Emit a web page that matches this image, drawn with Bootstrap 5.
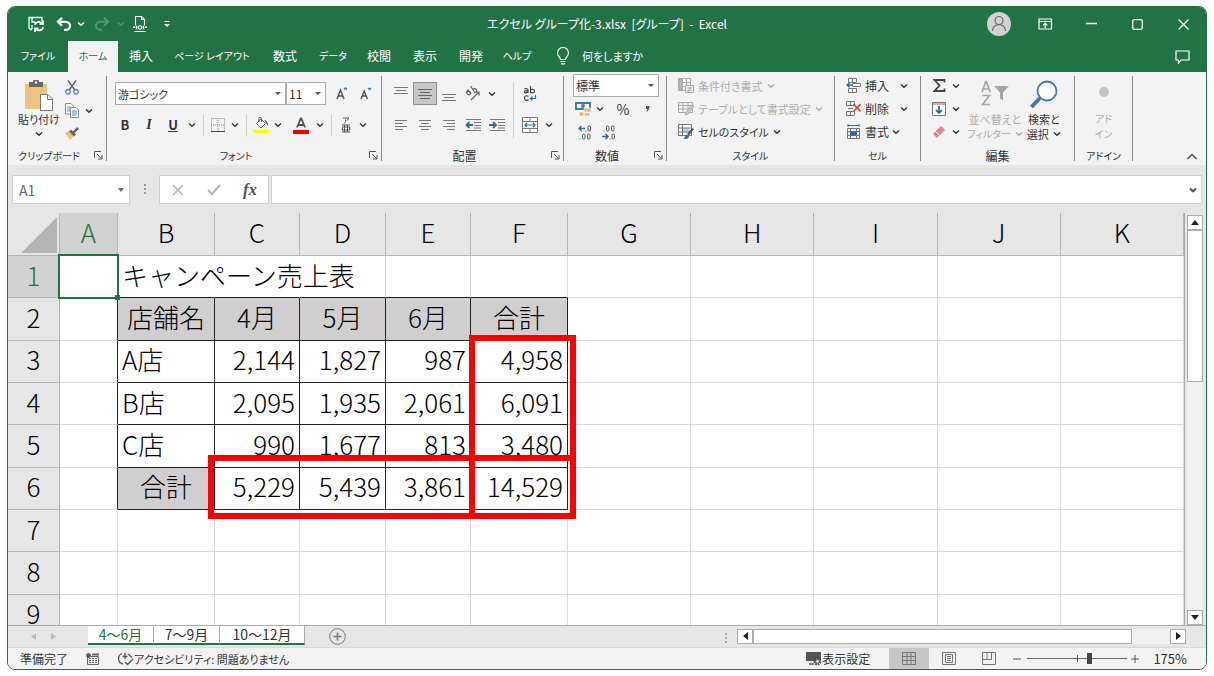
<!DOCTYPE html>
<html lang="ja">
<head>
<meta charset="utf-8">
<meta name="viewport" content="width=device-width, initial-scale=1">
<title>エクセル グループ化-3.xlsx - Excel</title>
<link href="https://cdn.jsdelivr.net/npm/bootstrap@5.3.0/dist/css/bootstrap.min.css" rel="stylesheet">
<style>
:root { --xl: #217346; --chrome: #e6e6e6; --ribbon: #f3f3f3; }
body { background: #fff; font-family: "Noto Sans CJK JP", sans-serif; font-size: 12px; line-height: 16px; color: #333; font-feature-settings: "palt"; }
.app { margin: 6px 7px; height: calc(100vh - 12px); border: 1px solid var(--xl); border-radius: 8px; overflow: hidden; background: var(--chrome); }
:where(.app) button, :where(.app) a { color: inherit; font-size: inherit; line-height: inherit; font-feature-settings: inherit; text-decoration: none; border: 0; border-radius: 0; background: none; padding: 0; display: inline-flex; align-items: center; justify-content: center; flex: none; white-space: nowrap; }
.app svg { display: block; flex: none; }
.kana { font-size: 11px; }
.kana-s { font-size: 10px; }
.w14 { width: 14px; } .w16 { width: 16px; } .w20 { width: 20px; } .w24 { width: 24px; }
.w46 { width: 46px; } .w50 { width: 50px; } .w60 { width: 60px; } .w96 { width: 96px; }
/* title bar and tabs */
.topbar { background: var(--xl); color: #fff; }
.titles { height: 34px; }
.quick { flex: 1 1 0; padding-left: 16px; }
.winctl { flex: 1 1 0; }
.tabs-row { height: 31px; }
.tabs-row a { height: 31px; padding-bottom: 2px; }
.tabs-row a.on { background: var(--ribbon); color: var(--xl); }
.app .cmt { margin-right: 16px; }
/* ribbon */
.ribbon { background: var(--ribbon); height: 93px; }
.ribbon .vr { margin: 4px 0; background: #8a8a8a; opacity: 1; width: 1px; min-height: 0; }
.grp { display: flex; flex-direction: column; flex: none; }
.grp-body { height: 74px; display: flex; }
.grp-label { height: 19px; display: flex; align-items: center; text-align: center; }
.app .launch { width: 16px; height: 16px; }
.g-clip { width: 98px; } .g-font { width: 274px; } .g-align { width: 181px; } .g-num { width: 102px; }
.g-style { width: 167px; } .g-cell { width: 85px; } .g-edit { width: 153px; } .g-add { width: 57px; }
.r23 { height: 23px; display: flex; align-items: center; }
.r24 { height: 24px; display: flex; align-items: center; }
.thin { width: 1px; background: #d0d0d0; margin: 0 4px; height: 22px; flex: none; }
.thin-tall { width: 1px; background: #d0d0d0; margin: 0 4px; height: 56px; flex: none; }
.pick { appearance: none; border: 1px solid #ababab; border-radius: 0; height: 23px; padding: 0 2px; font-feature-settings: inherit; color: #333; background: #fff url("data:image/svg+xml,%3Csvg xmlns='http://www.w3.org/2000/svg' width='6' height='4'%3E%3Cpath d='M0 0h6L3 3z' fill='%23555'/%3E%3C/svg%3E") no-repeat right 4px center; }
.off { color: #adadad; }
.app .sel { background: #c6c6c6; border: 1px solid #8f8f8f; height: 23px; }
.app .tall { flex-direction: column; justify-content: flex-start; }
.tall span { display: flex; align-items: center; height: 15px; }
/* formula bar */
.fbar { height: 49px; padding: 10px 4px 0 4px; }
.fbox { height: 29px; background: #fff; border: 1px solid #cfcfcf; }
.fbox input { border: 0; outline: 0; min-width: 0; background: none; font-size: 14px; color: #666; padding: 0 0 0 6px; }
.namebox { width: 118px; }
.fx { font: italic bold 17px "Liberation Serif", serif; color: #555; }
/* sheet */
.sheet { min-height: 0; }
.gridwrap { min-width: 0; overflow: hidden; position: relative; background: #fff; border-right: 1px solid #ababab; }
.cells { table-layout: fixed; width: 100%; height: 424px; border-collapse: separate; border-spacing: 0; font-size: 26px; line-height: 28px; font-weight: 300; font-feature-settings: normal; color: #000; white-space: nowrap; }
.cells th, .cells td { border: 0 solid #d9d9d9; border-width: 0 1px 1px 0; padding: 0 4px 4px; }
.cells th { background: var(--chrome); font-weight: 300; text-align: center; border-color: #b5b5b5; }
.cells thead th { height: 43px; }
.cells thead .all { padding: 4px 0 2px 13px; }
.cells th.on { background: #d2d2d2; color: var(--xl); }
.cells td.n { text-align: right; }
.cells td.h { background: #d0cece; text-align: center; }
.cells .k { border-color: #222; }
.cells .kr { border-right-color: #222; }
.cells .kb { border-bottom-color: #222; }
.cells .nr { border-right-color: #fff; }
.cells td.spill { overflow: visible; }
.active-cell { position: relative; }
.active-cell i { position: absolute; inset: -2px; border: 2px solid var(--xl); }
.active-cell i::after { content: ""; position: absolute; right: -3px; bottom: -3px; width: 5px; height: 5px; background: var(--xl); }
.mark-box { position: absolute; border: 6px solid #f00; }
.mark-total { left: 461px; top: 122px; width: 107px; height: 184px; }
.mark-sum { left: 200px; top: 242px; width: 368px; height: 64px; }
.vscroll { width: 21px; padding: 2px 3px 0 2px; flex: none; }
.app .sb { width: 16px; height: 15px; background: #fff; border: 1px solid #ababab; }
.vtrack { background: #f0f0f0; }
.vthumb { height: 40%; background: #fff; border: 1px solid #ababab; }
.htrack { width: 417px; background: #f0f0f0; }
.hthumb { width: 91%; height: 15px; background: #fff; border: 1px solid #ababab; }
/* sheet tabs */
.sheetbar { height: 23px; border-top: 1px solid #ababab; }
.app .stab { height: 19px; background: #fff; font-size: 14px; border-right: 1px solid #ababab; border-bottom: 2px solid var(--xl); width: 66px; }
.app .stab.wide { width: 85px; }
.app .stab.on { color: var(--xl); }
.hs { height: 18px; padding: 3px 20px 0 0; }
/* status bar */
.status { height: 22px; background: var(--ribbon); border-top: 1px solid #d8d8d8; }
.app .view { width: 40px; height: 21px; }
.app .view.on { background: #c6c6c6; }
.zoom-range { appearance: none; width: 100px; height: 13px; margin: 0; background: linear-gradient(#555,#555) 50% 50%/1px 7px no-repeat, linear-gradient(#666,#666) 0 50%/100% 1px no-repeat; }
.zoom-range::-webkit-slider-thumb { appearance: none; width: 5px; height: 11px; background: #444; border: 0; border-radius: 0; }
</style>
</head>
<body>
<svg width="0" height="0" class="position-absolute" aria-hidden="true">
  <symbol id="chev" viewBox="0 0 8 6"><path d="M1 1.500 4 4.300 7 1.500" fill="none" stroke="currentColor" stroke-width="1.400"/></symbol>
  <symbol id="launch" viewBox="0 0 9 9"><path d="M.5 7V.5H7M3 3l4.500 4.500M8 4v4H4" fill="none" stroke="#555"/></symbol>
</svg>
<div class="app d-flex flex-column">
  <header class="topbar">
    <div class="titles d-flex align-items-center">
      <div class="quick d-flex align-items-center">
        <button class="w24" aria-label="上書き保存"><svg width="18" height="18" viewBox="0 0 18 18" fill="none" stroke="#fff" stroke-width="1.300"><path d="M5 14.500H3.500L2 13V2.500h13V6M5 2.500V7h3M5 14v-4"/><path d="M7.800 9.800a4.300 4.300 0 0 1 7.700-1M16 5.500v3.700h-3.500M16.200 12.200a4.300 4.300 0 0 1-7.700 1.300M8 17v-3.700h3.500" stroke-width="1.700"/></svg></button>
        <button class="w24 ms-1" aria-label="元に戻す"><svg width="16" height="14" viewBox="0 0 16 14" fill="none" stroke="#fff" stroke-width="2.300"><path d="M6 .8 2 4.800l4 4M2.300 4.800H10a4 4 0 0 1 0 8H8"/></svg></button>
        <button style="width:10px" aria-label="元に戻す一覧"><svg width="8" height="6"><use href="#chev"/></svg></button>
        <button class="w24 ms-1" aria-label="やり直し"><svg width="16" height="14" viewBox="0 0 16 14" fill="none" stroke="#4f9870" stroke-width="2"><path d="m10 .8 4 4-4 4M13.700 4.800H6a4 4 0 0 0 0 8h2"/></svg></button>
        <button class="w14" style="color:#4f9870" aria-label="やり直し一覧"><svg width="8" height="6"><use href="#chev"/></svg></button>
        <button class="w24" aria-label="印刷プレビュー"><svg width="14" height="16" viewBox="0 0 14 16" fill="none" stroke="#fff" stroke-width="1.100"><path d="M2.500 9.500v-9h6l3 3v6M8.500.5v3h3M1.500 15.500h11"/><path d="M0 11.300h2M12 11.300h2M3.500 9.800v3.500M10.500 9.800v3.500" stroke-width="1.500"/><circle cx="7" cy="11.500" r="1.700"/></svg></button>
        <button class="w14 ms-2" aria-label="ツールバーのカスタマイズ"><svg width="8" height="8" viewBox="0 0 8 8"><path d="M1.500 1.500h5" stroke="#fff"/><path d="M1 4h6L4 7z" fill="#fff"/></svg></button>
      </div>
      <div class="me-3">エクセル グループ化-3.xlsx&nbsp; [グループ]&nbsp; -&nbsp; Excel</div>
      <div class="winctl d-flex justify-content-end">
        <button class="w46" aria-label="アカウント"><svg width="24" height="24" viewBox="0 0 24 24"><circle cx="12" cy="12" r="12" fill="#d2d2d2"/><g fill="none" stroke="#666" stroke-width="1.200"><circle cx="12" cy="8.500" r="4"/><path d="M5.500 19c0-8.600 13-8.600 13 0"/></g></svg></button>
        <button class="w46" aria-label="リボンの表示オプション"><svg width="15" height="12" viewBox="0 0 15 12" fill="none" stroke="#fff" stroke-width="1.200"><path d="M1 1h12.500v10H1zM1 3.500h12.500M7.200 10V5.500M5 7.500l2.200-2.200 2.200 2.200"/></svg></button>
        <button class="w46" aria-label="最小化"><svg width="11" height="11" viewBox="0 0 11 11"><path d="M0 4.500h11" stroke="#fff" stroke-width="1.300"/></svg></button>
        <button class="w46" aria-label="最大化"><svg width="11" height="11" viewBox="0 0 11 11"><rect x=".7" y=".7" width="9.600" height="9.600" rx="1.500" fill="none" stroke="#fff" stroke-width="1.300"/></svg></button>
        <button class="w46" aria-label="閉じる"><svg width="11" height="11" viewBox="0 0 11 11"><path d="m.5.5 10 10m0-10-10 10" stroke="#fff" stroke-width="1.300"/></svg></button>
      </div>
    </div>
    <nav class="tabs-row d-flex align-items-center">
      <a href="#" class="w60 kana-s">ファイル</a><a href="#" class="w50 kana-s on">ホーム</a><a href="#" class="w46">挿入</a><a href="#" class="w96 kana-s">ページ レイアウト</a><a href="#" class="w50">数式</a><a href="#" class="w46 kana-s">データ</a><a href="#" class="w46">校閲</a><a href="#" class="w46">表示</a><a href="#" class="w46">開発</a><a href="#" class="w46 kana-s">ヘルプ</a>
      <a href="#" class="ms-3 kana"><svg width="14" height="18" viewBox="0 0 14 18" fill="none" stroke="#fff" stroke-width="1.200"><path d="M4.500 12.500c0-2.500-3-3-3-6.500a5.500 5.500 0 0 1 11 0c0 3.500-3 4-3 6.500zM4.500 14.500h5M5 16.800h4"/></svg><span class="ms-2 ps-1">何をしますか</span></a>
      <button class="ms-auto cmt" aria-label="コメント"><svg width="15" height="14" viewBox="0 0 15 14" fill="none" stroke="#fff" stroke-width="1.200"><path d="M1 1h13v9H6l-2.500 3v-3H1z"/></svg></button>
    </nav>
  </header>

  <section class="ribbon d-flex">
    <div class="grp g-clip">
      <div class="grp-body">
        <button class="tall kana ms-2 pt-2" style="width:46px"><svg width="28" height="31" viewBox="0 0 28 31"><path d="M0 4h22v25H0z" fill="#eac282"/><path d="M4 2h4a3 3 0 0 1 6 0h4v5H4z" fill="#666"/><circle cx="11" cy="2.500" r="1.200" fill="#fff"/><path d="M15.500 14.500H23l4.500 4.500v11.500h-12z" fill="#fff" stroke="#777"/><path d="M22.500 14.500v5h5" fill="none" stroke="#777"/></svg><span>貼り付け</span><span><svg width="8" height="6"><use href="#chev"/></svg></span></button>
        <div class="pt-1">
          <div class="r23"><button class="w20" aria-label="切り取り"><svg width="14" height="15" viewBox="0 0 14 15" fill="none"><path d="m3 .5 6.500 9M11 .5l-6.500 9" stroke="#666" stroke-width="1.500"/><circle cx="3" cy="11.800" r="2.300" stroke="#4a86c5" stroke-width="1.300"/><circle cx="11" cy="11.800" r="2.300" stroke="#4a86c5" stroke-width="1.300"/></svg></button></div>
          <div class="r23"><button class="w20" aria-label="コピー"><svg width="14" height="15" viewBox="0 0 14 15" fill="#fff"><path d="M.5.5H6l2.500 2.500v8h-8z" stroke="#888"/><path d="M2 4h4M2 6h4M2 8h4" stroke="#888"/><path d="M5.500 4.500H11l2.500 2.500v7.500h-8z" stroke="#888"/><path d="M7 8h5M7 10h5M7 12h5" stroke="#4a86c5"/></svg></button><button class="w14" aria-label="コピー一覧"><svg width="8" height="6"><use href="#chev"/></svg></button></div>
          <div class="r23"><button class="w20" aria-label="書式のコピー"><svg width="14" height="13" viewBox="0 0 14 13"><path d="m0 6 4-2 5 5-4 4z" fill="#eac282"/><path d="M4 4.500 6 2.500l2 2L12 0l2 2-4.500 4 1.500 1.500-2 2z" fill="#666"/></svg></button></div>
        </div>
      </div>
      <div class="grp-label"><span class="flex-fill kana-s">クリップボード</span><button class="launch" aria-label="クリップボードの設定"><svg width="9" height="9"><use href="#launch"/></svg></button></div>
    </div>
    <div class="vr"></div>
    <div class="grp g-font">
      <div class="grp-body flex-column">
        <div class="r23" style="margin-top:10px"><select class="pick kana ms-2" style="width:171px" aria-label="フォント"><option>游ゴシック</option></select><select class="pick" style="width:40px" aria-label="フォント サイズ"><option>11</option></select><button class="w24 ms-1" aria-label="フォント サイズの拡大"><svg width="12" height="14" viewBox="0 0 12 14" fill="none"><path d="m1 12 3.500-9L8 12M2.300 9h4.500" stroke="#555" stroke-width="1.500"/><path d="m8 2.500 1.500-1.500L11 2.500" stroke="#2b6cb0" stroke-width="1.300"/></svg></button><button class="w24" aria-label="フォント サイズの縮小"><svg width="12" height="14" viewBox="0 0 12 14" fill="none"><path d="m1 12 3.200-8 3.200 8M2.300 9h4" stroke="#555" stroke-width="1.500"/><path d="m8 1 1.500 1.500L11 1" stroke="#2b6cb0" stroke-width="1.300"/></svg></button></div>
        <div class="r24 mt-2" style="padding-left:6px"><button class="w24" aria-label="太字"><b style="font-size:13px">B</b></button><button class="w24" aria-label="斜体"><b style="font:italic bold 14px 'Liberation Serif',serif">I</b></button><button class="w24" aria-label="下線"><b class="text-decoration-underline" style="font-size:13px">U</b></button><button class="w14" aria-label="下線の種類"><svg width="8" height="6"><use href="#chev"/></svg></button><div class="thin"></div><button class="w20" aria-label="罫線"><svg width="14" height="14" viewBox="0 0 14 14" fill="none" stroke="#888"><path d="M.5.5h13v13M.5.5v13M7 0v13M0 7h14" stroke-dasharray="1 1"/><path d="M0 13.500h14" stroke="#444"/></svg></button><button class="w14" aria-label="罫線の種類"><svg width="8" height="6"><use href="#chev"/></svg></button><div class="thin"></div><button class="w20" aria-label="塗りつぶしの色"><svg width="17" height="16" viewBox="0 0 17 16"><path d="M0 12.500h16V16H0z" fill="#ff0"/><path d="M3.500 6.500 8 2l4.500 4.500L8 11z" fill="#fff" stroke="#555"/><path d="M6 5V1.500a1.200 1.200 0 0 1 2.400 0V5" fill="none" stroke="#555"/><path d="M11 3c3 0 4 3 4 6-1.500-1-1.500-3-4-6z" fill="#2b6cb0"/></svg></button><button class="w14" aria-label="塗りつぶしの色一覧"><svg width="8" height="6"><use href="#chev"/></svg></button><button class="w24 ms-1" aria-label="フォントの色"><svg width="16" height="17" viewBox="0 0 16 17"><path d="m4 10.500 3.700-9h.6l3.700 9M5.300 8h5.400" fill="none" stroke="#555" stroke-width="1.800"/><path d="M0 13h16v4H0z" fill="#e00"/></svg></button><button class="w14" aria-label="フォントの色一覧"><svg width="8" height="6"><use href="#chev"/></svg></button><div class="thin"></div><button class="w20" aria-label="ふりがな"><svg width="10" height="16" viewBox="0 0 10 16" fill="none" stroke="#555"><path d="M2 1h6L6 3.500M4.500 2.500v2L3 6.500M1 8h8M1 15h8M3.500 8v7M6.500 8v7M1.500 10h7v3h-7z"/></svg></button><button class="w14" aria-label="ふりがな一覧"><svg width="8" height="6"><use href="#chev"/></svg></button></div>
      </div>
      <div class="grp-label"><span class="flex-fill kana-s">フォント</span><button class="launch" aria-label="フォントの設定"><svg width="9" height="9"><use href="#launch"/></svg></button></div>
    </div>
    <div class="vr"></div>
    <div class="grp g-align">
      <div class="grp-body align-items-start" style="padding:10px 0 0 7px">
        <div>
          <div class="r23"><button class="w24" aria-label="上揃え"><svg width="14" height="16" viewBox="0 0 14 16" stroke="#777"><path d="M0 1.500h14M2 4.500h10M0 7.500h14"/></svg></button><button class="w24 sel" aria-label="上下中央揃え"><svg width="14" height="12" viewBox="0 0 14 12" stroke="#666"><path d="M0 1.500h14M2 4.500h10M0 7.500h14M2 10.500h10"/></svg></button><button class="w24" aria-label="下揃え"><svg width="14" height="16" viewBox="0 0 14 16" stroke="#777"><path d="M0 8.500h14M2 11.500h10M0 14.500h14"/></svg></button><button class="w24" aria-label="方向"><svg width="16" height="15" viewBox="0 0 16 15" fill="none" stroke="#666" stroke-width="1.200"><path d="M1 6.500 3 4l3 4M2 7a1.700 1.700 0 1 0 3.500 0A1.700 1.700 0 0 0 2 7M5.500 0l4 6M8 3.500a2 2 0 1 1 1 3M6 14l8-8M10.500 6H14v3.500"/></svg></button><button class="w14" aria-label="方向一覧"><svg width="8" height="6"><use href="#chev"/></svg></button></div>
          <div class="r24 mt-2"><button class="w24" aria-label="左揃え"><svg width="12" height="10" viewBox="0 0 12 10" stroke="#777"><path d="M0 .5h12M0 3.500h8M0 6.500h12M0 9.500h8"/></svg></button><button class="w24" aria-label="中央揃え"><svg width="12" height="10" viewBox="0 0 12 10" stroke="#777"><path d="M0 .5h12M2 3.500h8M0 6.500h12M2 9.500h8"/></svg></button><button class="w24" aria-label="右揃え"><svg width="12" height="10" viewBox="0 0 12 10" stroke="#777"><path d="M0 .5h12M4 3.500h8M0 6.500h12M4 9.500h8"/></svg></button><button class="w24" aria-label="インデントを減らす"><svg width="16" height="12" viewBox="0 0 16 12" fill="none" stroke="#777"><path d="M1 .5h15M9 3.500h7M9 6.500h7M1 11.500h15M9 9h7"/><path d="M8 6H2M4.500 3 1.500 6l3 3" stroke="#2b6cb0" stroke-width="1.800"/></svg></button><button class="w24" aria-label="インデントを増やす"><svg width="16" height="12" viewBox="0 0 16 12" fill="none" stroke="#777"><path d="M1 .5h15M9 3.500h7M9 6.500h7M1 11.500h15M9 9h7"/><path d="M0 6h6M4 3l3 3-3 3" stroke="#2b6cb0" stroke-width="1.800"/></svg></button></div>
        </div>
        <div class="thin-tall"></div>
        <div>
          <div class="r23"><button class="w24" aria-label="折り返して全体を表示する"><svg width="14" height="16" viewBox="0 0 14 16" fill="none" stroke="#444" stroke-width="1.200"><path d="M1.500 3c2-1 3.500 0 3.500 1v3M5 5C3 4.500 1.300 5 1.300 6S3.500 7.500 5 6M7.500 0v7M7.500 4.500c1-2 4-1.500 4 .5s-3 2.500-4 .8M5.500 10.500C3.500 9 1.500 10 1.500 12s2 3 4 1.800"/><path d="M12.500 9v3.500h-5M9.500 10.500l-2 2 2 2" stroke="#2b6cb0"/></svg></button></div>
          <div class="r24 mt-2"><button class="w24" aria-label="セルを結合して中央揃え"><svg width="16" height="16" viewBox="0 0 16 16" fill="#fff" stroke="#777"><path d="M.5.5h15v15H.5zM.5 4.500h15M.5 11.500h15M8 .5v4M8 11.500v4"/><path d="M3 8h10M5 6 3 8l2 2M11 6l2 2-2 2" fill="none" stroke="#2b6cb0" stroke-width="1.200"/></svg></button><button class="w14" aria-label="結合一覧"><svg width="8" height="6"><use href="#chev"/></svg></button></div>
        </div>
      </div>
      <div class="grp-label"><span class="flex-fill">配置</span><button class="launch" aria-label="配置の設定"><svg width="9" height="9"><use href="#launch"/></svg></button></div>
    </div>
    <div class="vr"></div>
    <div class="grp g-num">
      <div class="grp-body flex-column" style="padding:2px 0 0 9px">
        <select class="pick" style="width:86px" aria-label="表示形式"><option>標準</option></select>
        <div class="r23"><button class="w20" aria-label="通貨表示形式"><svg width="17" height="16" viewBox="0 0 17 16"><path d="M0 1h16v8H0z" fill="#3c7ab8"/><path d="M2 3h12v4H2z" fill="#fff"/><circle cx="8" cy="5" r="2" fill="#3c7ab8"/><path d="M9 7h7v4H9zM9 12h6v3H9zM4 11h5v4H4z" fill="#e8b768" stroke="#fff" stroke-width=".6"/></svg></button><button class="w14" aria-label="通貨一覧"><svg width="8" height="6"><use href="#chev"/></svg></button><button class="w24 ms-1" style="font-size:14px">%</button><button class="w24" aria-label="桁区切り"><svg width="5" height="8" viewBox="0 0 5 8"><path d="M1 1h3.500c0 3-1 5-3.500 6.500C2 6 2.300 5 2.300 4H1z" fill="#555"/></svg></button></div>
        <div class="r24"><button class="w24" aria-label="小数点以下の表示桁数を増やす"><svg width="14" height="15" viewBox="0 0 14 15" fill="none" stroke="#555"><path d="M7 3.500H1.500M3.500 1 1 3.500 3.500 6" stroke="#2b6cb0" stroke-width="1.500"/><rect x="10" y="1" width="2.500" height="5" rx="1.200"/><path d="M7.500 6h1M1.500 14h1"/><rect x="4.500" y="9" width="2.500" height="5" rx="1.200"/><rect x="9.500" y="9" width="2.500" height="5" rx="1.200"/></svg></button><button class="w24" aria-label="小数点以下の表示桁数を減らす"><svg width="14" height="15" viewBox="0 0 14 15" fill="none" stroke="#555"><path d="M0 11.500h5.500M3.500 9 6 11.500 3.500 14" stroke="#2b6cb0" stroke-width="1.500"/><rect x="10" y="9" width="2.500" height="5" rx="1.200"/><path d="M7.500 14h1M1.500 6h1"/><rect x="4.500" y="1" width="2.500" height="5" rx="1.200"/><rect x="9.500" y="1" width="2.500" height="5" rx="1.200"/></svg></button></div>
      </div>
      <div class="grp-label"><span class="flex-fill">数値</span><button class="launch" aria-label="数値の設定"><svg width="9" height="9"><use href="#launch"/></svg></button></div>
    </div>
    <div class="vr"></div>
    <div class="grp g-style">
      <div class="grp-body flex-column align-items-start kana" style="padding:2px 0 0 11px">
        <button class="r23 off"><svg width="16" height="15" viewBox="0 0 16 15" fill="none" stroke="#aaa"><path d="M.5.5h12v12H.5zM.5 4.500h12M.5 8.500h12M4.500.5v12M8.500.5v12"/><path d="M1 1h3v11H1z" fill="#bbb"/><path d="M7.500 7.500h8v7h-8z" fill="#f3f3f3"/><path d="M9 10h5M9 12.500h5M10 14l3-5.500"/></svg><span class="mx-1">条件付き書式</span><svg width="8" height="6"><use href="#chev"/></svg></button>
        <button class="r23 off"><svg width="16" height="15" viewBox="0 0 16 15" fill="none" stroke="#aaa"><path d="M.5 1.500h14v10H.5zM.5 4.500h14M.5 8h14M5 1.500v10M10 1.500v10"/><path d="m7 14 1-3 6-7 2 1-6 8z" fill="#ccc"/></svg><span class="mx-1">テーブルとして書式設定</span><svg width="8" height="6"><use href="#chev"/></svg></button>
        <button class="r23"><svg width="16" height="15" viewBox="0 0 16 15" fill="none" stroke="#777"><path d="M.5.5h13v11H.5z" fill="#fff"/><path d="M4.500 4h7v4h-7z" fill="#bcd5ee" stroke="none"/><path d="M.5 4h13M.5 8h13M4.500.5v11"/><path d="m9 10 5-6 2 1-5 6.500z" fill="#555" stroke="none"/><path d="M5 14.500c2 0 1.500-3 4-4l2 2c0 2-3 3-6 2z" fill="#2b6cb0" stroke="none"/></svg><span class="mx-1">セルのスタイル</span><svg width="8" height="6"><use href="#chev"/></svg></button>
      </div>
      <div class="grp-label"><span class="flex-fill kana-s">スタイル</span></div>
    </div>
    <div class="vr"></div>
    <div class="grp g-cell">
      <div class="grp-body flex-column align-items-start" style="padding:2px 0 0 11px">
        <div class="r23"><button><svg width="15" height="15" viewBox="0 0 15 15" fill="none" stroke="#777"><path d="M2.500.5h8v4h-8zM6.500.5v4M2.500 10.500h8v4h-8zM6.500 10.500v4M6.500 5.500h8v3h-8z"/><path d="M6 7H1M3.500 4.800 1 7l2.500 2.200" stroke="#2b6cb0" stroke-width="1.500"/></svg><span class="ms-1">挿入</span></button><button class="w14 ms-2" aria-label="挿入一覧"><svg width="8" height="6"><use href="#chev"/></svg></button></div>
        <div class="r23"><button><svg width="15" height="15" viewBox="0 0 15 15" fill="none" stroke="#777"><path d="M.5.5h8v4h-8zM4.500.5v4M.5 10.500h8v4h-8zM4.500 10.500v4M2 7.500h5"/><path d="m7.500 3 7 7.500m0-7.500-7 7.500" stroke="#d8451f" stroke-width="1.600"/></svg><span class="ms-1">削除</span></button><button class="w14 ms-2" aria-label="削除一覧"><svg width="8" height="6"><use href="#chev"/></svg></button></div>
        <div class="r23"><button><svg width="15" height="16" viewBox="0 0 15 16" fill="none" stroke="#777"><path d="M1.500 4.500h12v10h-12zM1.500 7.500h12M1.500 11.500h12M4.500 4.500v10M10.500 4.500v10"/><path d="M5 8h5v3H5z" fill="#2b6cb0" stroke="#2b6cb0"/><path d="M2 1.500h11M2 0v3M13 0v3" stroke="#2b6cb0"/></svg><span class="ms-1">書式</span></button><button class="w14" aria-label="書式一覧"><svg width="8" height="6"><use href="#chev"/></svg></button></div>
      </div>
      <div class="grp-label"><span class="flex-fill kana-s">セル</span></div>
    </div>
    <div class="vr"></div>
    <div class="grp g-edit">
      <div class="grp-body" style="padding-left:8px">
        <div style="padding-top:2px">
          <div class="r23"><button class="w20" aria-label="合計"><svg width="13" height="13" viewBox="0 0 13 13" fill="none" stroke="#444" stroke-width="1.800"><path d="M11.500 3.500V1H1.500l5 5.500-5 5.500h10V9.500"/></svg></button><button class="w14" aria-label="合計一覧"><svg width="8" height="6"><use href="#chev"/></svg></button></div>
          <div class="r23"><button class="w20" aria-label="フィル"><svg width="14" height="14" viewBox="0 0 14 14" fill="#fff" stroke="#777"><path d="M.5.5h13v13H.5z"/><path d="M.5 2h13" stroke="#777"/><path d="M7 4v7M4 8l3 3 3-3" fill="none" stroke="#2b6cb0" stroke-width="1.800"/></svg></button><button class="w14" aria-label="フィル一覧"><svg width="8" height="6"><use href="#chev"/></svg></button></div>
          <div class="r23"><button class="w20" aria-label="クリア"><svg width="14" height="13" viewBox="0 0 14 13"><path d="m1 9 8-8 4 4-8 8z" fill="#e08396"/><path d="m3.500 6.500 4 4" stroke="#f3f3f3"/></svg></button><button class="w14" aria-label="クリア一覧"><svg width="8" height="6"><use href="#chev"/></svg></button></div>
        </div>
        <button class="tall off kana pt-2 ms-1"><svg width="28" height="31" viewBox="0 0 28 31" fill="none" stroke="#a6a6a6" stroke-width="1.700"><path d="M1 12 4.800 1.500h.6L9.200 12M2.300 9h5.600M1.500 15.500h7l-7 9h7.500"/><path d="M13 6h15l-6 6.500v8l-3-2v-6z" fill="#a6a6a6" stroke="none"/></svg><span>並べ替えと</span><span class="kana-s">フィルター<svg class="ms-1" width="8" height="6"><use href="#chev"/></svg></span></button>
        <button class="tall kana pt-2 ms-1"><svg width="28" height="31" viewBox="0 0 28 31"><path d="M10 18 1.500 27" stroke="#3c7ab8" stroke-width="4"/><circle cx="17" cy="11" r="9.500" fill="#fff" stroke="#3c7ab8" stroke-width="1.800"/></svg><span>検索と</span><span>選択<svg class="ms-1" width="8" height="6"><use href="#chev"/></svg></span></button>
      </div>
      <div class="grp-label"><span class="flex-fill">編集</span></div>
    </div>
    <div class="vr"></div>
    <div class="grp g-add">
      <div class="grp-body justify-content-center">
        <button class="tall off kana-s pt-2"><svg width="28" height="31" viewBox="0 0 28 31"><circle cx="14" cy="12" r="5" fill="#c4c4c4"/></svg><span>アド</span><span>イン</span></button>
      </div>
      <div class="grp-label"><span class="flex-fill kana-s">アドイン</span></div>
    </div>
    <div class="vr"></div>
    <button class="ms-auto me-2 align-self-end pb-1" aria-label="リボンを折りたたむ"><svg width="12" height="8" viewBox="0 0 12 8"><path d="m1.500 6 4.500-4.500L10.500 6" fill="none" stroke="#444" stroke-width="1.300"/></svg></button>
  </section>

  <section class="fbar d-flex">
    <div class="fbox namebox d-flex align-items-center"><input class="flex-fill" value="A1" aria-label="名前ボックス"><button class="w16" aria-label="名前一覧"><svg width="6" height="4" viewBox="0 0 6 4"><path d="M0 0h6L3 4z" fill="#666"/></svg></button></div>
    <div class="d-flex align-items-center justify-content-center" style="width:29px;height:28px"><svg width="2" height="11" fill="#999"><path d="M0 0h2v2H0zM0 4h2v2H0zM0 8h2v2H0z"/></svg></div>
    <div class="fbox d-flex align-items-center justify-content-around" style="width:110px">
      <button class="w24" aria-label="キャンセル"><svg width="12" height="12" viewBox="0 0 12 12"><path d="m1 1 10 10m0-10L1 11" stroke="#b5b5b5" stroke-width="1.500"/></svg></button>
      <button class="w24" aria-label="入力"><svg width="14" height="12" viewBox="0 0 14 12"><path d="m1 6 4 4 8-9" fill="none" stroke="#b5b5b5" stroke-width="2.200"/></svg></button>
      <button class="w24 fx" aria-label="関数の挿入">fx</button>
    </div>
    <div class="fbox d-flex align-items-center flex-fill" style="margin-left:2px"><input class="flex-fill" aria-label="数式バー"><button class="w16" aria-label="数式バーの展開"><svg width="8" height="6" viewBox="0 0 8 6"><path d="M1 1.500 4 4.300 7 1.500" fill="none" stroke="#555" stroke-width="2"/></svg></button></div>
  </section>

  <main class="sheet d-flex flex-fill">
    <div class="gridwrap flex-fill">
      <table class="cells">
        <colgroup><col style="width:52px"><col style="width:58px"><col style="width:97px"><col style="width:85px"><col style="width:86px"><col style="width:85px"><col style="width:97px"><col><col><col><col><col></colgroup>
        <thead><tr><th class="all" aria-label="すべて選択"><svg width="36" height="36"><path d="M36 0v36H0z" fill="#b4b4b4"/></svg></th><th class="on">A</th><th>B</th><th>C</th><th>D</th><th>E</th><th>F</th><th>G</th><th>H</th><th>I</th><th>J</th><th>K</th></tr></thead>
        <tbody>
        <tr><th class="on">1</th><td class="active-cell"><i></i></td><td class="spill kb nr">キャンペーン売上表</td><td class="kb nr"></td><td class="kb"></td><td class="kb"></td><td class="kb"></td><td></td><td></td><td></td><td></td><td></td></tr>
        <tr><th>2</th><td class="kr"></td><td class="h k">店舗名</td><td class="h k">4月</td><td class="h k">5月</td><td class="h k">6月</td><td class="h k">合計</td><td></td><td></td><td></td><td></td><td></td></tr>
        <tr><th>3</th><td class="kr"></td><td class="k">A店</td><td class="n k">2,144</td><td class="n k">1,827</td><td class="n k">987</td><td class="n k">4,958</td><td></td><td></td><td></td><td></td><td></td></tr>
        <tr><th>4</th><td class="kr"></td><td class="k">B店</td><td class="n k">2,095</td><td class="n k">1,935</td><td class="n k">2,061</td><td class="n k">6,091</td><td></td><td></td><td></td><td></td><td></td></tr>
        <tr><th>5</th><td class="kr"></td><td class="k">C店</td><td class="n k">990</td><td class="n k">1,677</td><td class="n k">813</td><td class="n k">3,480</td><td></td><td></td><td></td><td></td><td></td></tr>
        <tr><th>6</th><td class="kr"></td><td class="h k">合計</td><td class="n k">5,229</td><td class="n k">5,439</td><td class="n k">3,861</td><td class="n k">14,529</td><td></td><td></td><td></td><td></td><td></td></tr>
        <tr><th>7</th><td></td><td></td><td></td><td></td><td></td><td></td><td></td><td></td><td></td><td></td><td></td></tr>
        <tr><th>8</th><td></td><td></td><td></td><td></td><td></td><td></td><td></td><td></td><td></td><td></td><td></td></tr>
        <tr><th>9</th><td></td><td></td><td></td><td></td><td></td><td></td><td></td><td></td><td></td><td></td><td></td></tr>
        </tbody>
      </table>
      <div class="mark-box mark-total"></div>
      <div class="mark-box mark-sum"></div>
    </div>
    <div class="vscroll d-flex flex-column">
      <button class="sb" aria-label="上へスクロール"><svg width="8" height="5"><path d="M0 5h8L4 0z" fill="#222"/></svg></button>
      <div class="vtrack flex-fill"><div class="vthumb"></div></div>
      <button class="sb" aria-label="下へスクロール"><svg width="8" height="5"><path d="M0 0h8L4 5z" fill="#222"/></svg></button>
    </div>
  </main>

  <div class="sheetbar d-flex">
    <div class="d-flex align-items-center justify-content-center" style="width:80px;padding-right:10px"><button class="w20" aria-label="前のシート"><svg width="5" height="7"><path d="M5 0v7L0 3.500z" fill="#bbb"/></svg></button><button class="w20" aria-label="次のシート"><svg width="5" height="7"><path d="M0 0v7l5-3.500z" fill="#bbb"/></svg></button></div>
    <button class="stab on">4～6月</button><button class="stab">7～9月</button><button class="stab wide">10～12月</button>
    <button class="ms-4" aria-label="新しいシート"><svg width="17" height="17" viewBox="0 0 17 17" fill="none" stroke="#777"><circle cx="8.500" cy="8.500" r="7.800"/><path d="M8.500 4.500v8M4.500 8.500h8" stroke-width="1.500"/></svg></button>
    <div class="hs d-flex ms-auto">
      <svg class="me-2 mt-1" width="6" height="10" fill="#aaa"><path d="M2 0h2v2H2zM2 4h2v2H2zM2 8h2v2H2z"/></svg>
      <button class="sb" aria-label="左へスクロール"><svg width="5" height="8"><path d="M5 0v8L0 4z" fill="#222"/></svg></button>
      <div class="htrack"><div class="hthumb"></div></div>
      <button class="sb" aria-label="右へスクロール"><svg width="5" height="8"><path d="M0 0v8l5-4z" fill="#222"/></svg></button>
    </div>
  </div>

  <footer class="status d-flex align-items-center">
    <span style="padding-left:12px">準備完了</span>
    <button class="w16 ms-3" style="margin-right:18px" aria-label="マクロの記録"><svg width="13" height="12" viewBox="0 0 13 12" fill="none" stroke="#666"><path d="M1.500 3.500h11v8h-11z"/><path d="M3 5.500h8M3 7.500h8M3 9.500h8" stroke-dasharray="2 1"/><path d="M6 1.500h7" stroke-width="2"/><circle cx="2.500" cy="2.500" r="2" fill="#555"/></svg></button>
    <button><svg width="16" height="14" viewBox="0 0 16 14" fill="none" stroke="#555" stroke-width="1.300"><path d="M4 1.500a5.500 5.500 0 0 0 1 10.500M7 1v6M4.500 4.500h5M10 2l4 3.500M7 10l2.500 2.500L15 7"/></svg><span class="kana">アクセシビリティ: 問題ありません</span></button>
    <button class="ms-auto" style="margin-right:19px"><svg width="16" height="15" viewBox="0 0 16 15"><path d="M0 1h15v9H0z" fill="#555"/><path d="M3 13h5" stroke="#555" stroke-width="1.500"/><circle cx="11.500" cy="10.500" r="3" fill="#f3f3f3" stroke="#444" stroke-width="1.800" stroke-dasharray="1.800 .8"/><circle cx="11.500" cy="10.500" r="2" fill="#f3f3f3" stroke="#444"/></svg>表示設定</button>
    <button class="view on" aria-label="標準"><svg width="14" height="13" viewBox="0 0 14 13" fill="none" stroke="#777"><path d="M.5.5h13v12H.5zM.5 4.500h13M.5 8.500h13M5 .5v12M9 .5v12"/></svg></button>
    <button class="view" aria-label="ページ レイアウト"><svg width="14" height="13" viewBox="0 0 14 13" fill="none" stroke="#777"><path d="M.5.5h13v12H.5zM3.500 2.500h7v8h-7zM5 4.500h4M5 6.500h4M5 8.500h4"/></svg></button>
    <button class="view" aria-label="改ページ プレビュー"><svg width="14" height="13" viewBox="0 0 14 13" fill="none" stroke="#777"><path d="M.5.5h13v12H.5zM.5 7.500h9M5 .5v7M9.500.5v7"/></svg></button>
    <button class="w16" style="margin-right:2px" aria-label="縮小"><svg width="8" height="8"><path d="M0 4h8" stroke="#555"/></svg></button>
    <input type="range" class="zoom-range" min="10" max="190" value="123" aria-label="ズーム">
    <button class="w16" aria-label="拡大"><svg width="8" height="8"><path d="M0 4h8M4 0v8" stroke="#555"/></svg></button>
    <button style="margin:0 19px 0 10px;font-size:13px">175%</button>
  </footer>
</div>
<script src="https://cdn.jsdelivr.net/npm/bootstrap@5.3.0/dist/js/bootstrap.bundle.min.js"></script>
</body>
</html>
